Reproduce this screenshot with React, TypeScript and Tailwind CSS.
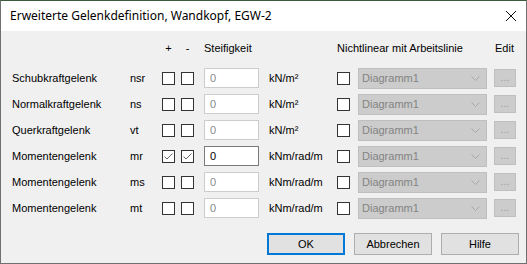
import React from "react";

interface RowDef {
  label: string;
  code: string;
  unit: string;
  checked?: boolean;
}

const rows: RowDef[] = [
  { label: "Schubkraftgelenk", code: "nsr", unit: "kN/m²" },
  { label: "Normalkraftgelenk", code: "ns", unit: "kN/m²" },
  { label: "Querkraftgelenk", code: "vt", unit: "kN/m²" },
  { label: "Momentengelenk", code: "mr", unit: "kNm/rad/m", checked: true },
  { label: "Momentengelenk", code: "ms", unit: "kNm/rad/m" },
  { label: "Momentengelenk", code: "mt", unit: "kNm/rad/m" },
];

const CheckBox: React.FC<{ checked?: boolean }> = ({ checked }) => (
  <div className="w-[13px] h-[13px] border border-[#333333] bg-white flex items-center justify-center">
    {checked && (
      <svg width="11" height="11" viewBox="0 0 11 11">
        <polyline points="1.5,5.5 4,8 9.5,2.5" fill="none" stroke="#666666" strokeWidth="1" />
      </svg>
    )}
  </div>
);

const App: React.FC = () => {
  return (
    <div
      className="w-[527px] h-[264px] flex flex-col border border-[#707070] border-t-[#3d5a3d] bg-[#f0f0f0] text-[11px] text-black"
      style={{ fontFamily: '"Liberation Sans", Arial, sans-serif' }}
    >
      {/* title bar */}
      <div
        className="h-[30px] bg-white flex items-center justify-between pl-[9px] pr-[9px] shrink-0"
        style={{ fontFamily: '"Noto Sans", sans-serif' }}
      >
        <span className="text-[12px]">Erweiterte Gelenkdefinition, Wandkopf, EGW-2</span>
        <svg width="12" height="12" viewBox="0 0 12 12">
          <path d="M1 1 L11 11 M11 1 L1 11" stroke="#111111" strokeWidth="1" />
        </svg>
      </div>

      <div className="flex flex-col pl-[11px] pt-[7px]">
        {/* header */}
        <div className="flex items-center h-[20px] whitespace-nowrap">
          <div className="w-[150px] shrink-0" />
          <div className="w-[19px] shrink-0">
            <div className="w-[13px] text-center">+</div>
          </div>
          <div className="w-[23px] shrink-0">
            <div className="w-[13px] text-center">-</div>
          </div>
          <div className="w-[133px] shrink-0">Steifigkeit</div>
          <div className="w-[158px] shrink-0">Nichtlinear mit Arbeitslinie</div>
          <div>Edit</div>
        </div>

        <div className="flex flex-col mt-[7px]">
          {rows.map((r, i) => (
            <div key={i} className="flex items-center h-[26px] whitespace-nowrap">
              <div className="w-[118px] shrink-0">{r.label}</div>
              <div className="w-[32px] shrink-0">{r.code}</div>
              <div className="w-[19px] shrink-0">
                <CheckBox checked={r.checked} />
              </div>
              <div className="w-[23px] shrink-0">
                <CheckBox checked={r.checked} />
              </div>
              <div
                className={`w-[55px] h-[20px] shrink-0 bg-white border flex items-center pl-[5px] ${
                  r.checked ? "border-[#7a7a7a] text-black" : "border-[#cccccc] text-[#8a8a8a]"
                }`}
              >
                0
              </div>
              <div className="w-[78px] pl-[10px] shrink-0">{r.unit}</div>
              <div className="w-[21px] shrink-0">
                <CheckBox />
              </div>
              <div className="w-[129px] h-[21px] shrink-0 bg-[#cccccc] border border-[#bfbfbf] flex items-center justify-between pl-[3px] pr-[6px] text-[#838383]">
                <span>Diagramm1</span>
                <svg width="9" height="5" viewBox="0 0 9 5">
                  <polyline points="0.5,0.5 4.5,4.5 8.5,0.5" fill="none" stroke="#a8a8a8" strokeWidth="1" />
                </svg>
              </div>
              <div className="ml-[7px] w-[22px] h-[18px] shrink-0 bg-[#cccccc] border border-[#bfbfbf] flex items-center justify-center text-[#a0a0a0] leading-none pb-[2px]">
                ...
              </div>
            </div>
          ))}
        </div>

        <div className="flex justify-end gap-[9px] mt-[12px] pr-[7px]">
          <button className="w-[78px] h-[22px] bg-[#e1e1e1] border-2 border-[#0078d7]">OK</button>
          <button className="w-[78px] h-[22px] bg-[#e1e1e1] border border-[#adadad]">Abbrechen</button>
          <button className="w-[78px] h-[22px] bg-[#e1e1e1] border border-[#adadad]">Hilfe</button>
        </div>
      </div>
    </div>
  );
};

export default App;
